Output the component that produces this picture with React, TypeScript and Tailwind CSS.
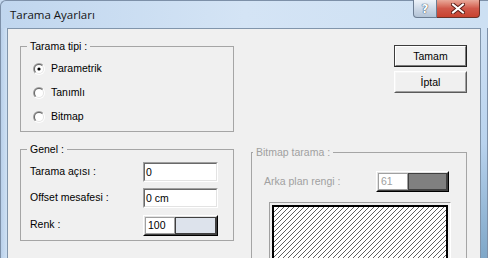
import { useId } from "react";

function Radio({ checked }: { checked?: boolean }) {
  const id = useId().replace(/[^a-zA-Z0-9]/g, "");
  return (
    <svg width="12" height="12" viewBox="0 0 12 12" className="shrink-0">
      <defs>
        <linearGradient id={`o${id}`} x1="0" y1="0" x2="1" y2="1">
          <stop offset="0.5" stopColor="#a0a0a0" />
          <stop offset="0.5" stopColor="#ffffff" />
        </linearGradient>
        <linearGradient id={`i${id}`} x1="0" y1="0" x2="1" y2="1">
          <stop offset="0.5" stopColor="#696969" />
          <stop offset="0.5" stopColor="#e3e3e3" />
        </linearGradient>
      </defs>
      <circle cx="6" cy="6" r="6" fill={`url(#o${id})`} />
      <circle cx="6" cy="6" r="5" fill={`url(#i${id})`} />
      <circle cx="6" cy="6" r="4" fill="#ffffff" />
      {checked && <circle cx="6" cy="6" r="1.6" fill="#000000" />}
    </svg>
  );
}

function Field({ value }: { value: string }) {
  return (
    <div className="w-[75px] h-[20px] shrink-0 border border-t-[#a0a0a0] border-l-[#a0a0a0] border-r-white border-b-white">
      <div className="h-full bg-white border border-t-[#696969] border-l-[#696969] border-r-[#e3e3e3] border-b-[#e3e3e3] flex items-center pl-[1px] leading-none">
        {value}
      </div>
    </div>
  );
}

function ColorBox({
  value,
  swatch,
  disabled,
  width,
}: {
  value: string;
  swatch: string;
  disabled?: boolean;
  width: string;
}) {
  return (
    <div
      className={`${width} h-[21px] shrink-0 border border-t-white border-l-white border-r-black border-b-black flex`}
    >
      <div className="flex-1 flex border border-t-[#e3e3e3] border-l-[#e3e3e3] border-r-[#404040] border-b-[#404040]">
        <div
          className={`w-[30px] bg-white border border-[#a0a0a0] flex items-center pl-[2px] leading-none ${
            disabled ? "text-[#a0a0a0]" : "text-black"
          }`}
        >
          {value}
        </div>
        <div className={`flex-1 border border-[#404040] ${swatch}`} />
      </div>
    </div>
  );
}

function Hatch() {
  const w = 172;
  const h = 60;
  const lines: number[] = [];
  for (let x = -h; x < w + 5; x += 5) lines.push(x);
  return (
    <svg width={w} height={h} viewBox={`0 0 ${w} ${h}`} className="block bg-white">
      {lines.map((x) => (
        <line key={x} x1={x} y1={h} x2={x + h} y2={0} stroke="#1a1a1a" strokeWidth="0.7" />
      ))}
    </svg>
  );
}

export default function App() {
  return (
    <div className="w-[488px] h-[258px] overflow-hidden flex flex-col bg-[#c6daf0] font-['Liberation_Sans',Arial,sans-serif] text-[10.5px] text-black">
      {/* Title bar */}
      <div className="h-[28px] shrink-0 flex items-start border-t border-l border-[#7d90a8] rounded-tl-[6px] bg-gradient-to-r from-[#c0d6ee] via-[#d4e4f5] to-[#cde0f3]">
        <span className="mt-[6px] ml-[9px] font-['Open_Sans',Arial,sans-serif] text-[11.5px] leading-[16px] text-[#151515]">
          Tarama Ayarları
        </span>
        <div className="ml-auto mr-[8px] flex h-[18px] -mt-[1px]">
          <div className="w-[24px] h-full rounded-bl-[4px] border border-[#6c7d92] border-t-0 bg-gradient-to-b from-[#eef3f9] via-[#cdd9e7] to-[#b3c3d6] flex items-center justify-center">
            <span className="font-['DejaVu_Sans',sans-serif] font-bold text-[12px] leading-none text-white [text-shadow:0_0_1px_#2a3a4e,0_0_1px_#2a3a4e]">
              ?
            </span>
          </div>
          <div className="w-[43px] h-full rounded-br-[4px] border border-l-0 border-t-0 border-[#6b3128] bg-gradient-to-b from-[#e9a99a] via-[#d0584a] to-[#c8422f] flex items-center justify-center">
            <svg width="14" height="11" viewBox="0 0 14 11">
              <path d="M2,1.5 L12,9.5 M12,1.5 L2,9.5" stroke="#5a1c16" strokeWidth="4" strokeLinecap="square" />
              <path d="M2,1.5 L12,9.5 M12,1.5 L2,9.5" stroke="#ffffff" strokeWidth="2" strokeLinecap="square" />
            </svg>
          </div>
        </div>
      </div>

      {/* Body */}
      <div className="flex-1 flex min-h-0">
        <div className="w-[7px] shrink-0 border-l border-[#7d90a8] bg-gradient-to-r from-[#b9d0ea] to-[#cfe1f4]" />
        <div className="flex-1 flex bg-[#f0f0f0] border-t border-l border-r border-[#8195ab] overflow-hidden">
          {/* Left column */}
          <div className="ml-[12px] w-[214px] shrink-0 flex flex-col">
            <fieldset className="mt-[10px] shrink-0 min-w-0 border border-[#a5a5a5] pb-[2px]">
              <legend className="ml-[6px] px-[3px] leading-[15px]">Tarama tipi :</legend>
              <div className="pt-[3px] pl-[12px] flex flex-col">
                <div className="h-[24px] flex items-center gap-[6px]">
                  <Radio checked />
                  <span>Parametrik</span>
                </div>
                <div className="h-[24px] flex items-center gap-[6px]">
                  <Radio />
                  <span>Tanımlı</span>
                </div>
                <div className="h-[24px] flex items-center gap-[6px]">
                  <Radio />
                  <span>Bitmap</span>
                </div>
              </div>
            </fieldset>

            <fieldset className="mt-[10px] shrink-0 min-w-0 border border-[#a5a5a5] pb-[5px]">
              <legend className="ml-[6px] px-[3px] leading-[15px]">Genel :</legend>
              <div className="pt-[5px] pl-[9px] flex flex-col">
                <div className="h-[20px] flex items-center">
                  <span className="w-[113px]">Tarama açısı :</span>
                  <Field value="0" />
                </div>
                <div className="mt-[6px] h-[20px] flex items-center">
                  <span className="w-[113px]">Offset mesafesi :</span>
                  <Field value="0 cm" />
                </div>
                <div className="mt-[7px] h-[20px] flex items-center">
                  <span className="w-[113px]">Renk :</span>
                  <ColorBox value="100" swatch="bg-[#dde3ec]" width="w-[75px]" />
                </div>
              </div>
            </fieldset>
          </div>

          {/* Right column */}
          <div className="ml-[17px] w-[216px] shrink-0 flex flex-col">
            <div className="mt-[16px] shrink-0 self-end w-[73px] h-[22px] border border-[#3c3c3c] border-r-[#202020] border-b-[#202020]">
              <div className="h-full border border-t-white border-l-white border-r-[#7a7a7a] border-b-[#7a7a7a] bg-[#f0f0f0] flex items-center justify-center leading-none">
                Tamam
              </div>
            </div>
            <div className="mt-[4px] shrink-0 self-end w-[73px] h-[22px] border border-t-white border-l-white border-r-[#5a5a5a] border-b-[#5a5a5a]">
              <div className="h-full border border-t-[#f5f5f5] border-l-[#f5f5f5] border-r-[#a0a0a0] border-b-[#a0a0a0] bg-[#f0f0f0] flex items-center justify-center leading-none">
                İptal
              </div>
            </div>

            <fieldset className="mt-[52px] shrink-0 min-w-0 border border-[#a5a5a5] text-[#a0a0a0]">
              <legend className="ml-[1px] px-[3px] leading-[15px]">Bitmap tarama :</legend>
              <div className="pt-[11px] flex items-center">
                <span className="pl-[12px] w-[124px]">Arka plan rengi :</span>
                <ColorBox value="61" swatch="bg-[#808080]" disabled width="w-[73px]" />
              </div>
              <div className="mt-[10px] ml-[17px] w-[182px] h-[70px] p-[2px] border border-t-[#a0a0a0] border-l-[#a0a0a0] border-r-white border-b-white">
                <div className="w-full h-full border-2 border-black overflow-hidden">
                  <Hatch />
                </div>
              </div>
            </fieldset>
          </div>
        </div>
        <div className="w-[7px] shrink-0 border-r border-[#7d90a8] bg-gradient-to-b from-[#cfe1f4] via-[#b9d3ee] to-[#7fa7c8]" />
      </div>
    </div>
  );
}
